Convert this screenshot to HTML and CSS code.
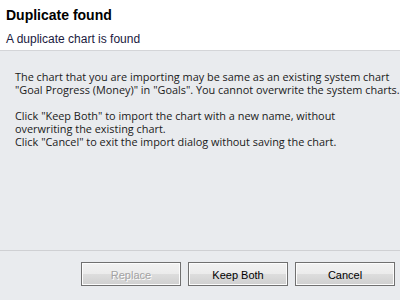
FILE: index.html
```html
<!DOCTYPE html>
<html lang="en">
<head>
    <meta charset="UTF-8">
    <title>Duplicate found</title>
    <link rel="stylesheet" href="styles.css">
</head>
<body>
    <div class="dialog">
        <!-- header -->
        <div class="header">
            <div class="title">Duplicate found</div>
            <div class="subtitle">A duplicate chart is found</div>
        </div>

        <!-- message -->
        <div class="content">
            <p class="message">The chart that you are importing may be same as an existing system chart<br>"Goal Progress (Money)" in "Goals". You cannot overwrite the system charts.</p>
            <p class="message">Click "Keep Both" to import the chart with a new name, without<br>overwriting the existing chart.<br>Click "Cancel" to exit the import dialog without saving the chart.</p>
        </div>

        <!-- buttons -->
        <div class="footer">
            <button class="button" disabled>Replace</button>
            <button class="button">Keep Both</button>
            <button class="button">Cancel</button>
        </div>
    </div>
</body>
</html>
```

FILE: styles.css
```css
body {
    margin: 0;
    padding: 0;
    background-color: #e9ebee;
    font-family: "Liberation Sans", Arial, sans-serif;
    overflow: hidden;
}

.dialog {
    width: 400px;
    height: 300px;
    display: flex;
    flex-direction: column;
}

/* header */
.header {
    background: #ffffff;
    border-bottom: 1px solid #d4d5d8;
    padding: 0 6px;
    box-sizing: border-box;
    height: 51px;
}
.title {
    font-weight: bold;
    font-size: 14px;
    color: #000000;
    padding-top: 7px;
    line-height: 16px;
}
.subtitle {
    font-size: 12px;
    color: #1a1a40;
    margin-top: 9px;
    line-height: 14px;
}

/* message */
.content {
    flex: 1;
    padding: 19px 0 0 15px;
    border-bottom: 1px solid #cfd0d3;
}
.message {
    margin: 0 0 13px 0;
    font-family: "Open Sans", "Liberation Sans", sans-serif;
    font-size: 10.9px;
    line-height: 13px;
    color: #1a1a1a;
    white-space: nowrap;
}

/* buttons */
.footer {
    height: 49px;
    display: flex;
    justify-content: flex-end;
    align-items: flex-start;
    gap: 7px;
    padding: 11px 5px 0 0;
    box-sizing: border-box;
}
.button {
    width: 100px;
    height: 24px;
    border: 1px solid #707070;
    background: linear-gradient(#f2f2f2 0%, #ebebeb 50%, #dddddd 51%, #cfcfcf 100%);
    box-shadow: inset 0 0 0 1px #fcfcfc;
    font-family: "Liberation Sans", Arial, sans-serif;
    font-size: 11px;
    color: #000000;
    padding: 2px 0 0 0;
}
.button:disabled {
    color: #a3a3a3;
    text-shadow: 1px 1px 0 #ffffff;
    border-color: #707070;
}
```
